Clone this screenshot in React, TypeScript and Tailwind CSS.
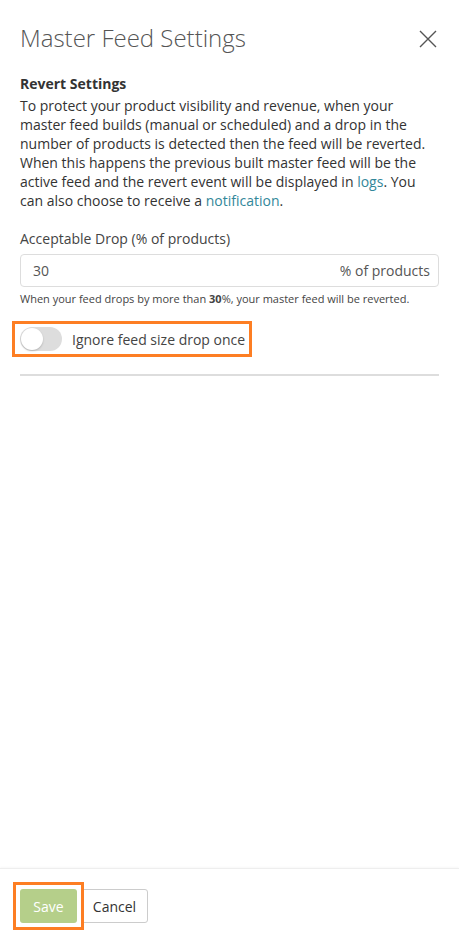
import { useState } from "react";

function CloseIcon() {
  return (
    <svg width="18" height="18" viewBox="0 0 18 18" fill="none" stroke="#555" strokeWidth="1.4">
      <path d="M1 1L17 17M17 1L1 17" />
    </svg>
  );
}

export default function App() {
  const [drop, setDrop] = useState("30");
  const [ignore, setIgnore] = useState(false);

  return (
    <div
      className="flex h-screen w-full flex-col bg-white text-[#333]"
      style={{ fontFamily: '"Open Sans", "Liberation Sans", sans-serif' }}
    >
      <div className="flex-1 px-5">
        <div className="flex items-center justify-between pt-[21px]">
          <h1 className="text-[24px] font-light leading-[33px] text-[#555]">Master Feed Settings</h1>
          <button className="mr-[2px] mt-[2px]">
            <CloseIcon />
          </button>
        </div>

        <div className="mt-[20px]">
          <h3 className="mb-[3px] text-[14px] font-bold leading-[19px] text-[#333]">Revert Settings</h3>
          <p className="text-[14px] leading-[19px] text-[#333]">
            To protect your product visibility and revenue, when your master feed builds (manual or
            scheduled) and a drop in the number of products is detected then the feed will be reverted.
            When this happens the previous built master feed will be the active feed and the revert
            event will be displayed in <a className="text-[#32879a]">logs</a>. You can also choose to
            receive a <a className="text-[#32879a]">notification</a>.
          </p>
        </div>

        <div className="mt-[19px]">
          <label className="block text-[14px] leading-[19px] text-[#444]">Acceptable Drop (% of products)</label>
          <div className="mt-[6px] flex h-[33px] items-center rounded-[4px] border border-[#ddd] pl-3 pr-[8px]">
            <input
              value={drop}
              onChange={(e) => setDrop(e.target.value)}
              className="w-full bg-transparent text-[14px] text-[#555] outline-none"
            />
            <span className="shrink-0 text-[14px] text-[#555]">% of products</span>
          </div>
          <p className="mt-[4px] text-[11px] leading-[16px] text-[#444]">
            When your feed drops by more than <b>{drop}</b>%, your master feed will be reverted.
          </p>
        </div>

        <div className="mt-[14px] -ml-2 inline-flex items-center gap-[10px] border-[3px] border-[#fd7e23] py-[3px] pl-[5px] pr-[4px]">
          <button
            onClick={() => setIgnore(!ignore)}
            className={`flex h-[24px] w-[42px] items-center rounded-full p-[1px] ${ignore ? "justify-end bg-[#b5cf8a]" : "bg-[#ddd]"}`}
          >
            <span className="h-[22px] w-[22px] rounded-full bg-white shadow-[0_1px_2px_rgba(0,0,0,0.2)]" />
          </button>
          <span className="text-[14px] leading-[19px] text-[#444]">Ignore feed size drop once</span>
        </div>

        <div className="mt-[17px] h-[2px] bg-[#ddd]" />
      </div>

      <div className="border-t border-[#eee] px-5 pb-[17px] pt-[20px] shadow-[0_-1px_2px_rgba(0,0,0,0.03)]">
        <div className="flex items-center gap-[4px]">
          <div className="relative">
            <button className="h-[34px] w-[57px] rounded-[3px] bg-[#b5cf8a] text-[14px] text-white">Save</button>
            <span className="pointer-events-none absolute -inset-[7px] border-[3px] border-[#fd7e23]" />
          </div>
          <button className="h-[34px] w-[67px] rounded-[3px] border border-[#ccc] bg-white text-[14px] text-[#333]">
            Cancel
          </button>
        </div>
      </div>
    </div>
  );
}
